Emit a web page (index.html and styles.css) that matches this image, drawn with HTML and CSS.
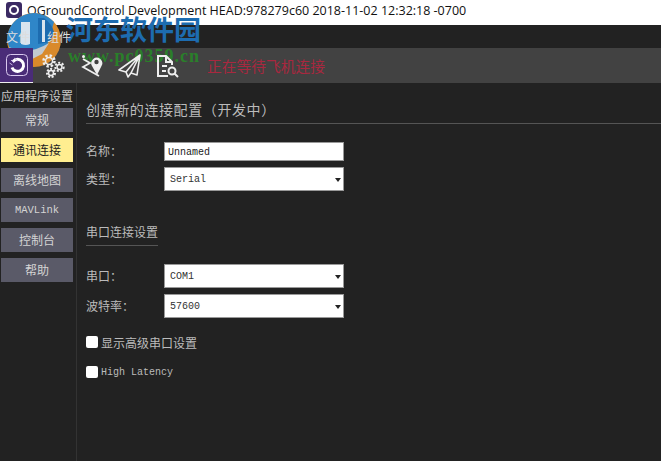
FILE: index.html
```html
<!DOCTYPE html>
<html lang="zh">
<head>
    <meta charset="UTF-8">
    <title>QGroundControl</title>
    <link rel="stylesheet" href="styles.css">
</head>
<body>
    <div class="titlebar">
        <svg class="app-icon" width="16" height="16" viewBox="0 0 16 16">
            <rect x="0" y="0" width="16" height="16" rx="3" fill="#3b2a63"/>
            <circle cx="8" cy="8" r="4" fill="none" stroke="#fff" stroke-width="2"/>
        </svg>
        <span>QGroundControl Development HEAD:978279c60 2018-11-02 12:32:18 -0700</span>
    </div>
    <div class="menubar">
        <span>文件</span>
        <span>组件</span>
    </div>
    <div class="toolbar">
        <div class="tool-home">
            <svg width="22" height="22" viewBox="0 0 22 22">
                <rect x="0.5" y="0.5" width="21" height="21" rx="4" fill="none" stroke="#d9c8ee" stroke-width="1"/>
                <path d="M7 7.5a6 6 0 1 1 -1 6" fill="none" stroke="#fff" stroke-width="3"/>
                <path d="M8 4l4 3M5 6l3 3M3.500 9l3 2" stroke="#c9b6e6" stroke-width="1"/>
            </svg>
        </div>
        <div class="tool-icons">
            <svg width="24" height="24" viewBox="0 0 24 24" fill="none" stroke="#eee">
                <circle cx="8" cy="7" r="3.500" stroke-width="1.500"/>
                <circle cx="8" cy="7" r="5.500" stroke-width="2.500" stroke-dasharray="2.400 1.900"/>
                <circle cx="18.500" cy="13" r="2.500" stroke-width="1.500"/>
                <circle cx="18.500" cy="13" r="4.200" stroke-width="2" stroke-dasharray="2 1.600"/>
                <circle cx="10" cy="19" r="2.500" stroke-width="1.500"/>
                <circle cx="10" cy="19" r="4" stroke-width="2" stroke-dasharray="2 1.500"/>
            </svg>
            <svg width="24" height="24" viewBox="0 0 24 24" fill="none" stroke="#eee" stroke-width="1.800">
                <circle cx="4.500" cy="2.500" r="1.500" fill="#eee" stroke="none"/>
                <path d="M4 5l7 4-7 4 16 9"/>
                <path d="M18 21l-5-9a5.500 5.500 0 1 1 9.500 0z" fill="#eee" stroke="none"/>
                <circle cx="17.500" cy="8" r="2.200" fill="#404040" stroke="none"/>
            </svg>
            <svg width="24" height="24" viewBox="0 0 24 24" fill="none" stroke="#eee" stroke-width="1.600" stroke-linejoin="round">
                <path d="M23 1L2 16l7 2 2 5 3-4 6 2zM23 1L9 18l2 5M23 1L14 19"/>
            </svg>
            <svg width="24" height="24" viewBox="0 0 24 24" fill="none" stroke="#eee" stroke-width="2">
                <path d="M13 22H3V2h8l6 6v3M11 2v6h6M7 12h5M7 17h4"/>
                <circle cx="17" cy="17" r="3.500"/>
                <path d="M19.500 19.500l3.500 3.500"/>
            </svg>
        </div>
        <span class="status">正在等待飞机连接</span>
    </div>
    <div class="main">
        <div class="sidebar">
            <div class="side-title">应用程序设置</div>
            <div class="side-btn">常规</div>
            <div class="side-btn active">通讯连接</div>
            <div class="side-btn">离线地图</div>
            <div class="side-btn mono">MAVLink</div>
            <div class="side-btn">控制台</div>
            <div class="side-btn">帮助</div>
        </div>
        <div class="content">
            <div class="page-title">创建新的连接配置（开发中）</div>
            <div class="form-row first">
                <label>名称：</label>
                <div class="input">Unnamed</div>
            </div>
            <div class="form-row">
                <label>类型：</label>
                <div class="input select">Serial</div>
            </div>
            <div class="section-title">串口连接设置</div>
            <div class="form-row">
                <label>串口：</label>
                <div class="input select">COM1</div>
            </div>
            <div class="form-row">
                <label>波特率：</label>
                <div class="input select">57600</div>
            </div>
            <div class="check-row first">
                <span class="check"></span>显示高级串口设置
            </div>
            <div class="check-row">
                <span class="check"></span>High Latency
            </div>
        </div>
    </div>

    <!-- site watermark over the top left corner -->
    <div class="watermark">
        <svg class="wm-logo" width="62" height="60" viewBox="0 0 62 60">
            <circle cx="34" cy="30" r="27" fill="#d98a2b"/>
            <path d="M7 30a27 27 0 0 1 47-18L47 36Q28 47 10 40z" fill="#2f86c8"/>
            <path d="M9 37Q28 46 49 33L42 44Q30 50 25 53Q13 48 9 37z" fill="#c3c9cf"/>
            <path d="M21 12h9v22q-4 2-9 0z" fill="#d8e4ee"/>
            <path d="M38 8h6q8 6 10 14l-4 10-12 2z" fill="#1d6cb0"/>
            <path d="M42 10h3v22h-3z" fill="#d8e4ee"/>
        </svg>
        <div class="wm-name">河东软件园</div>
        <div class="wm-url">www.pc0359.cn</div>
    </div>
</body>
</html>
```

FILE: styles.css
```css
body {
    margin: 0;
    height: 461px;
    overflow: hidden;
    background: #222;
    font-family: "Noto Sans CJK SC", "Liberation Serif", serif;
    position: relative;
}

.titlebar {
    display: flex;
    align-items: center;
    gap: 5px;
    height: 20px;
    padding: 0 0 5px 6px;
    background: #fff;
    color: #111;
    font-family: "Open Sans", "Noto Sans CJK SC", sans-serif;
    font-size: 12.5px;
    white-space: nowrap;
}

.menubar {
    display: flex;
    gap: 17px;
    align-items: center;
    height: 23px;
    padding-left: 6px;
    color: #ddd;
    font-size: 12px;
}

/* these sit on top of the watermark logo */
.menubar span,
.tool-home,
.tool-icons {
    position: relative;
    z-index: 2;
}

.toolbar {
    display: flex;
    align-items: center;
    height: 35px;
    background: #424242;
}

.tool-home {
    display: flex;
    align-items: center;
    justify-content: center;
    width: 33px;
    height: 34px;
    background: #4a2c78;
    border-bottom: 1px solid #eee;
}

.tool-icons {
    display: flex;
    gap: 14px;
    margin-left: 8px;
}

.status {
    margin-left: 28px;
    color: #a8283f;
    font-size: 14.75px;
    white-space: nowrap;
}

.main {
    display: flex;
    height: 378px;
}

.sidebar {
    width: 76px;
    border-right: 1px solid #333;
    padding-top: 5px;
    flex-shrink: 0;
}

.side-title {
    margin: 0 0 4px 1px;
    color: #c8c8c8;
    font-size: 12px;
    line-height: 16px;
    white-space: nowrap;
}

.side-btn {
    width: 72px;
    height: 24px;
    line-height: 24px;
    margin: 0 0 6px 1px;
    background: #5a5a68;
    color: #d4d4d4;
    font-size: 12px;
    text-align: center;
}

.side-btn.active {
    background: #ffee90;
    color: #222;
}

.side-btn.mono {
    font-family: "Liberation Mono", monospace;
    font-size: 10.5px;
}

.content {
    flex: 1;
    padding: 14px 0 0 9px;
    color: #bbb;
    font-size: 12px;
}

.page-title {
    height: 26px;
    line-height: 24px;
    border-bottom: 1px solid #555;
    font-size: 14px;
    letter-spacing: 0.6px;
}

.form-row {
    display: flex;
    align-items: center;
    margin-bottom: 6px;
}

.form-row.first {
    margin-top: 18px;
}

.form-row label {
    width: 78px;
    padding-bottom: 2px;
}

.input {
    box-sizing: border-box;
    width: 180px;
    height: 19px;
    line-height: 19px;
    padding-left: 3px;
    background: #fff;
    border: 1px solid #999;
    color: #222;
    font-family: "Liberation Mono", monospace;
    font-size: 10px;
    position: relative;
}

.input.select {
    height: 24px;
    line-height: 24px;
    padding-left: 5px;
    color: #333;
}

.input.select::after {
    content: "";
    position: absolute;
    right: 2px;
    top: 10px;
    border: 3px solid transparent;
    border-top: 4px solid #222;
    border-bottom: 0;
}

.section-title {
    width: 72px;
    height: 25px;
    line-height: 24px;
    margin: 29px 0 18px;
    border-bottom: 1px solid #555;
    white-space: nowrap;
}

.check-row {
    display: flex;
    align-items: center;
    gap: 3px;
    height: 12px;
    margin-bottom: 18px;
    font-family: "Liberation Mono", "Noto Sans CJK SC", monospace;
    font-size: 10px;
}

.check-row.first {
    margin-top: 18px;
    font-family: "Noto Sans CJK SC", sans-serif;
    font-size: 12px;
}

.check {
    width: 12px;
    height: 12px;
    background: #fff;
    border-radius: 2px;
}

.watermark {
    position: absolute;
    left: 0;
    top: 0;
    width: 210px;
    height: 70px;
}

.wm-logo {
    position: absolute;
    left: 0;
    top: 10px;
}

.wm-name {
    position: absolute;
    left: 66px;
    top: 11px;
    color: #1d6cb0;
    font-family: "Noto Sans CJK SC", sans-serif;
    font-size: 27px;
    font-weight: 700;
    line-height: 36px;
    white-space: nowrap;
}

.wm-url {
    position: absolute;
    left: 68px;
    top: 46px;
    color: #2a7f2a;
    font-family: "Liberation Serif", serif;
    font-size: 18px;
    font-weight: 700;
    letter-spacing: 1px;
    white-space: nowrap;
}
```
